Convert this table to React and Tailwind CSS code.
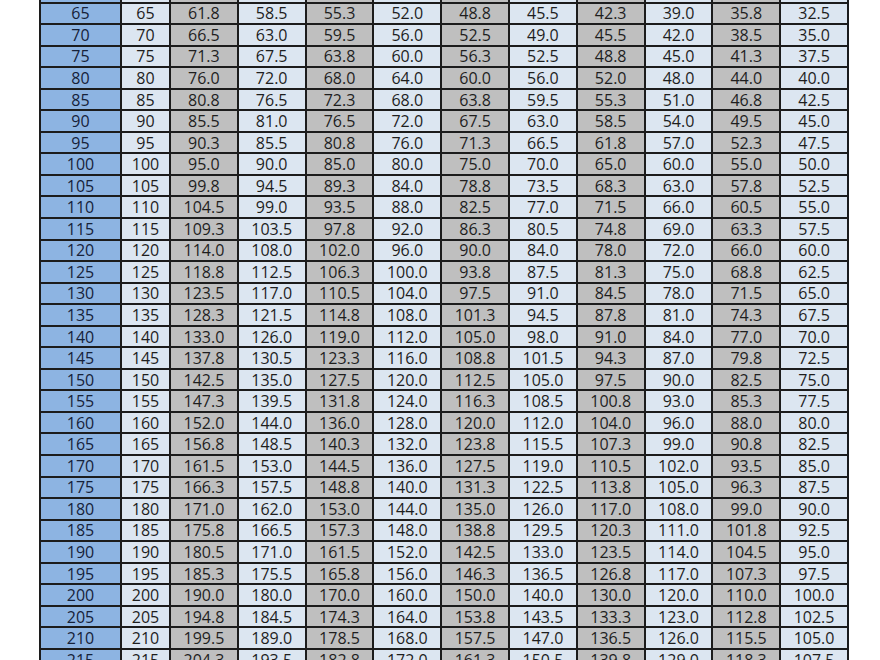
import React from 'react';

// percentages of the working weight, left to right
const PCTS = [95, 90, 85, 80, 75, 70, 65, 60, 55, 50];

const weights = [];
for (let w = 65; w <= 215; w += 5) weights.push(w);

const pct = (w, p) => (Math.round((w * p) / 10) / 10).toFixed(1);

const cell = 'border-2 border-[#1c1c1c] p-0';

const App = () => {
  return (
    <div className="w-[880px] h-[660px] overflow-hidden bg-white">
      <div className="pl-[39px] -mt-[20px]">
        <table
          className="table-fixed border-collapse w-[808px] text-center text-[16px] leading-none text-[#1e1e1e]"
          style={{ fontFamily: '"Open Sans", "Noto Sans", sans-serif' }}
        >
          <colgroup>
            <col className="w-[81px]" />
            <col className="w-[49px]" />
            {PCTS.map((p) => (
              <col key={p} className="w-[67.8px]" />
            ))}
          </colgroup>
          <tbody>
            {/* row above, scrolled out of view */}
            <tr className="h-[21.55px]">
              <td className={`${cell} bg-[#8db4e2]`} />
              <td className={`${cell} bg-[#dce6f1]`} />
              {PCTS.map((p, i) => (
                <td key={p} className={i % 2 === 0 ? `${cell} bg-[#bfbfbf]` : `${cell} bg-[#dce6f1]`} />
              ))}
            </tr>
            {weights.map((w) => (
              <tr key={w} className="h-[21.55px]">
                <td className={`${cell} bg-[#8db4e2] text-[#16223a]`}>{w}</td>
                <td className={`${cell} bg-[#dce6f1]`}>{w}</td>
                {PCTS.map((p, i) => (
                  <td key={p} className={i % 2 === 0 ? `${cell} bg-[#bfbfbf]` : `${cell} bg-[#dce6f1]`}>
                    {pct(w, p)}
                  </td>
                ))}
              </tr>
            ))}
          </tbody>
        </table>
      </div>
    </div>
  );
};

export default App;
